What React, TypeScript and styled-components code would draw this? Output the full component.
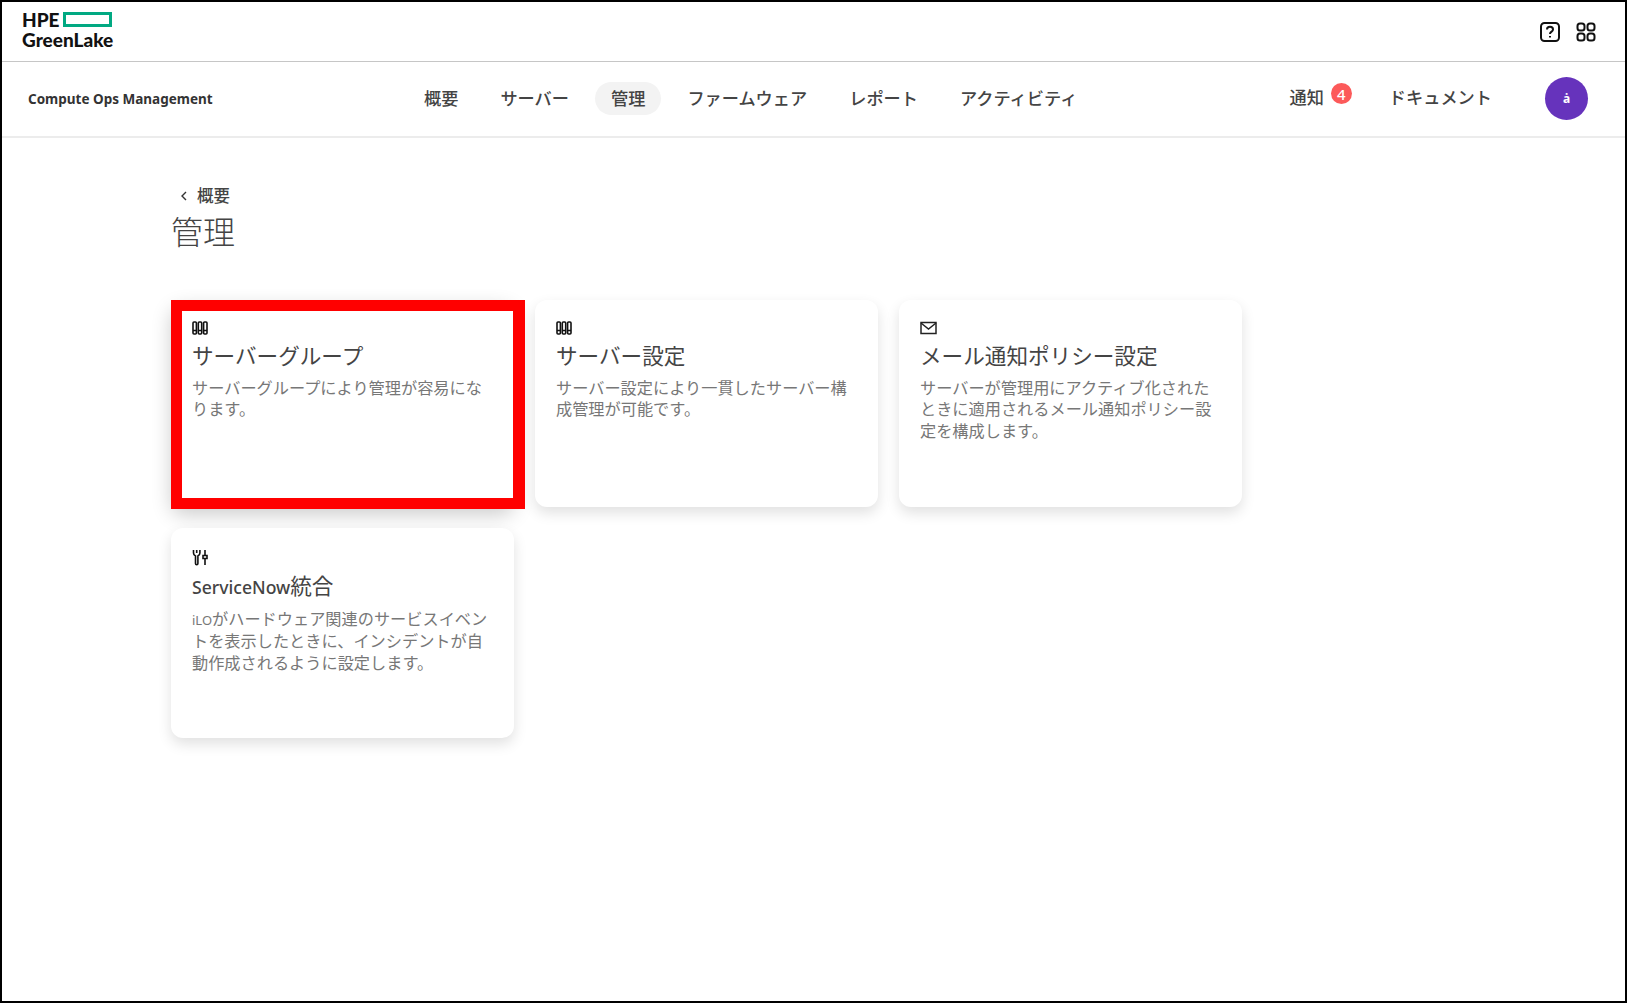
import React from 'react'
import styled, { createGlobalStyle } from 'styled-components'

const GlobalStyle = createGlobalStyle`
    html, body {
        margin: 0;
        padding: 0;
        background: #fff;
        font-family: "Noto Sans", "Noto Sans CJK JP", sans-serif;
    }
`

const Frame = styled.div`
    box-sizing: border-box;
    width: 1627px;
    height: 1003px;
    border: 2px solid #000;
    overflow: hidden;
    background: #fff;
`

const TopBar = styled.header`
    box-sizing: border-box;
    height: 60px;
    display: flex;
    align-items: center;
    justify-content: space-between;
    padding: 0 29px 0 20px;
    border-bottom: 1px solid #c6c6c6;
`

const Logo = styled.div`
    display: flex;
    flex-direction: column;
    padding-bottom: 4px;
    font-family: "Lato", sans-serif;
    font-weight: 900;
    color: #111;
    line-height: 20px;
    font-size: 19px;
`

const LogoRow = styled.div`
    display: flex;
    align-items: center;
    gap: 3px;
`

const TopIcons = styled.div`
    display: flex;
    align-items: center;
    gap: 16px;
`

const NavBar = styled.nav`
    box-sizing: border-box;
    height: 76px;
    display: flex;
    align-items: center;
    padding: 0 37px 2px 26px;
    border-bottom: 2px solid #ececec;
`

const Product = styled.div`
    width: 380px;
    padding-top: 2px;
    font-size: 13.5px;
    font-weight: 700;
    color: #333;
`

const NavItems = styled.div`
    display: flex;
    align-items: center;
    gap: 10px;
`

const NavItem = styled.a<{ $active?: boolean }>`
    box-sizing: border-box;
    padding: 0 16px 2px;
    height: 33px;
    display: flex;
    align-items: center;
    border-radius: 17px;
    font-size: 17.2px;
    font-weight: 500;
    color: #444;
    background: ${(p) => (p.$active ? '#f3f3f3' : 'transparent')};
`

const NavRight = styled.div`
    margin-left: auto;
    display: flex;
    align-items: center;
`

const NavLink = styled.a`
    position: relative;
    padding-bottom: 3px;
    font-size: 17.2px;
    font-weight: 500;
    color: #444;
`

const Badge = styled.span`
    position: absolute;
    top: -1px;
    right: -28px;
    width: 21px;
    height: 21px;
    border-radius: 50%;
    background: #fc5a5a;
    color: #fff;
    font-size: 15px;
    font-weight: 500;
    display: flex;
    align-items: center;
    justify-content: center;
`

const DocLink = styled(NavLink)`
    margin-left: 65px;
`

const Avatar = styled.div`
    margin-left: 53px;
    width: 43px;
    height: 43px;
    border-radius: 50%;
    background: #6633bc;
    color: #fff;
    font-size: 12px;
    font-weight: 700;
    display: flex;
    align-items: center;
    justify-content: center;
`

const Main = styled.main`
    padding: 46px 0 0 169px;
`

const BackLink = styled.a`
    display: flex;
    align-items: center;
    gap: 9px;
    padding-left: 9px;
    font-size: 16.5px;
    font-weight: 500;
    color: #444;
    line-height: 24px;
`

const Title = styled.h1`
    margin: 2px 0 0;
    font-size: 32px;
    line-height: 44px;
    font-weight: 300;
    color: #444;
`

const CardGrid = styled.div`
    margin-top: 46px;
    display: grid;
    grid-template-columns: repeat(3, 343px);
    grid-template-rows: 207px 210px;
    column-gap: 21px;
    row-gap: 21px;
`

const Card = styled.section<{ $raised?: boolean }>`
    position: relative;
    box-sizing: border-box;
    padding: 19px 21px;
    background: #fff;
    border-radius: 12px;
    box-shadow: ${(p) => (p.$raised ? '0 8px 20px rgba(0, 0, 0, 0.2)' : '0 6px 14px rgba(0, 0, 0, 0.12)')};
`

const CardIcon = styled.div<{ $tall?: boolean }>`
    height: ${(p) => (p.$tall ? '20px' : '18px')};
    display: flex;
    align-items: center;
`

const CardTitle = styled.h2`
    margin: 4px 0 0;
    font-size: 21.6px;
    line-height: 30px;
    font-weight: 400;
    color: #444;
`

const LatinTitle = styled.span`
    font-size: 17.6px;
    font-weight: 500;
`

const CardText = styled.p`
    margin: 7px 0 0;
    font-size: 16.2px;
    line-height: 21.3px;
    color: #777;
`

const LatinText = styled.span`
    font-size: 13px;
`

const Highlight = styled.div`
    position: absolute;
    top: 0;
    left: 0;
    box-sizing: border-box;
    width: 354px;
    height: 209px;
    border-style: solid;
    border-color: #ff0000;
    border-width: 11px 12px 11px 11px;
`

function ServerIcon() {
    return (
        <svg width="16" height="14" viewBox="0 0 16 14" fill="none" stroke="#111" strokeWidth="1.6">
            <rect x="1" y="1" width="3.4" height="12" rx="1" />
            <rect x="6.3" y="1" width="3.4" height="12" rx="1" />
            <rect x="11.6" y="1" width="3.4" height="12" rx="1" />
            <path d="M1 9.500h3.400M6.300 9.500h3.400M11.600 9.500h3.400" />
        </svg>
    )
}

function MailIcon() {
    return (
        <svg width="17" height="14" viewBox="0 0 17 14" fill="none" stroke="#222" strokeWidth="1.5">
            <rect x="1" y="1.5" width="15" height="11" />
            <path d="M1 2l7.500 6L16 2" />
        </svg>
    )
}

function ToolsIcon() {
    return (
        <svg width="17" height="17" viewBox="0 0 17 17" fill="none" stroke="#111" strokeWidth="1.6">
            <path d="M1.500 1v3c0 1.500 1 2.500 2 3v7.500a1.200 1.200 0 0 0 2.400 0V7c1-.5 2-1.500 2-3V1M4.700 1v3" />
            <path d="M13 1v5M11 6.500h4v3h-4zM13 9.500V16" />
        </svg>
    )
}

function HelpIcon() {
    return (
        <svg width="20" height="20" viewBox="0 0 20 20" fill="none" stroke="#111" strokeWidth="2">
            <rect x="1" y="1" width="18" height="18" rx="3.500" />
            <path d="M7 7.500c0-1.800 1.400-2.700 3-2.700s3 .9 3 2.600c0 2.200-3 2.300-3 4.600" />
            <path d="M10 14v1.500" />
        </svg>
    )
}

function GridIcon() {
    return (
        <svg width="20" height="20" viewBox="0 0 20 20" fill="none" stroke="#111" strokeWidth="2">
            <rect x="1.500" y="1.500" width="7" height="7" rx="2.500" />
            <rect x="11.500" y="1.500" width="7" height="7" rx="2.500" />
            <rect x="1.500" y="11.500" width="7" height="7" rx="2.500" />
            <rect x="11.500" y="11.500" width="7" height="7" rx="2.500" />
        </svg>
    )
}

function ChevronIcon() {
    return (
        <svg width="8" height="10" viewBox="0 0 8 10" fill="none" stroke="#333" strokeWidth="1.4">
            <path d="M6 1L2 5l4 4" />
        </svg>
    )
}

function App() {
    return (
        <Frame>
            <GlobalStyle />
            <TopBar>
                <Logo>
                    <LogoRow>
                        HPE
                        <svg width="49" height="15" viewBox="0 0 49 15" fill="none" stroke="#01a982" strokeWidth="3">
                            <rect x="1.500" y="1.500" width="46" height="12" />
                        </svg>
                    </LogoRow>
                    <div>GreenLake</div>
                </Logo>
                <TopIcons>
                    <HelpIcon />
                    <GridIcon />
                </TopIcons>
            </TopBar>
            <NavBar>
                <Product>Compute Ops Management</Product>
                <NavItems>
                    <NavItem>概要</NavItem>
                    <NavItem>サーバー</NavItem>
                    <NavItem $active>管理</NavItem>
                    <NavItem>ファームウェア</NavItem>
                    <NavItem>レポート</NavItem>
                    <NavItem>アクティビティ</NavItem>
                </NavItems>
                <NavRight>
                    <NavLink>
                        通知
                        <Badge>4</Badge>
                    </NavLink>
                    <DocLink>ドキュメント</DocLink>
                    <Avatar>ȧ</Avatar>
                </NavRight>
            </NavBar>
            <Main>
                <BackLink>
                    <ChevronIcon />
                    概要
                </BackLink>
                <Title>管理</Title>
                <CardGrid>
                    <Card $raised>
                        <CardIcon><ServerIcon /></CardIcon>
                        <CardTitle>サーバーグループ</CardTitle>
                        <CardText>サーバーグループにより管理が容易になります。</CardText>
                        <Highlight />
                    </Card>
                    <Card>
                        <CardIcon><ServerIcon /></CardIcon>
                        <CardTitle>サーバー設定</CardTitle>
                        <CardText>サーバー設定により一貫したサーバー構成管理が可能です。</CardText>
                    </Card>
                    <Card>
                        <CardIcon><MailIcon /></CardIcon>
                        <CardTitle>メール通知ポリシー設定</CardTitle>
                        <CardText>サーバーが管理用にアクティブ化されたときに適用されるメール通知ポリシー設定を構成します。</CardText>
                    </Card>
                    <Card>
                        <CardIcon $tall><ToolsIcon /></CardIcon>
                        <CardTitle><LatinTitle>ServiceNow</LatinTitle>統合</CardTitle>
                        <CardText><LatinText>iLO</LatinText>がハードウェア関連のサービスイベン<br />トを表示したときに、インシデントが自動作成されるように設定します。</CardText>
                    </Card>
                </CardGrid>
            </Main>
        </Frame>
    )
}

export default App
